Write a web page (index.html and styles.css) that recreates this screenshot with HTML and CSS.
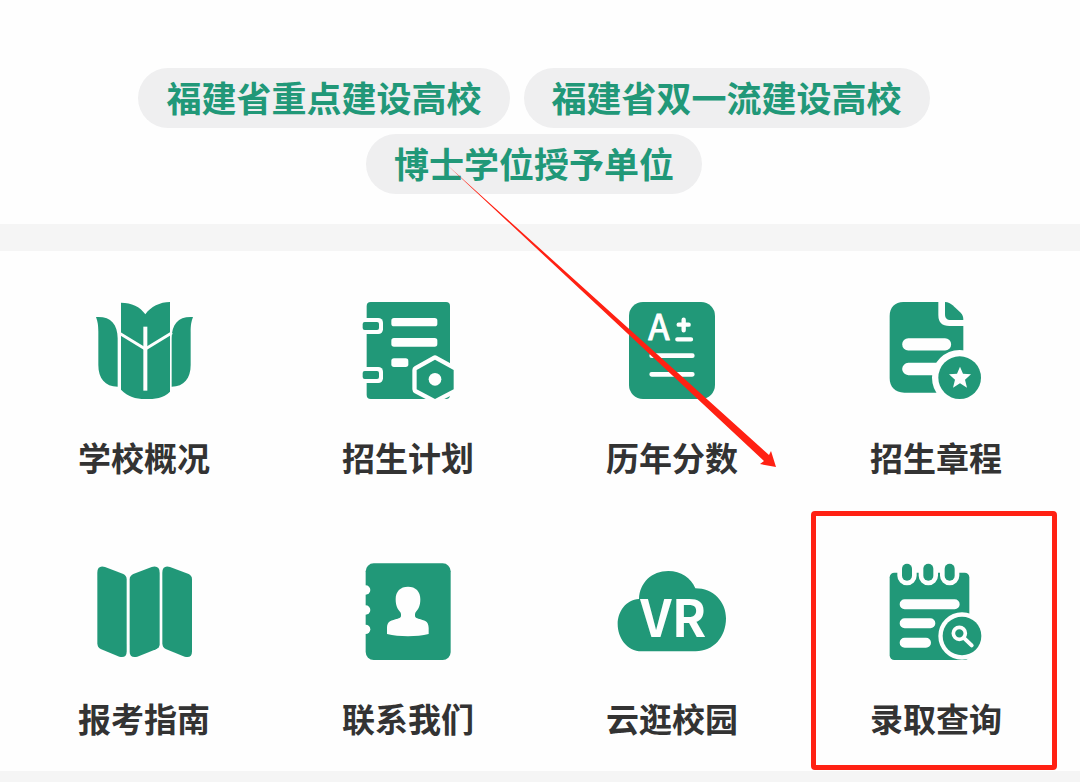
FILE: index.html
```html
<!DOCTYPE html>
<html lang="zh-CN">
<head>
  <meta charset="UTF-8" />
  <meta name="viewport" content="width=device-width, initial-scale=1.0"/>
  <title>招生服务</title>
  <link rel="stylesheet" href="styles.css">
</head>
<body>
  <header class="school">
    <ul class="tags">
      <li class="tag">福建省重点建设高校</li>
      <li class="tag">福建省双一流建设高校</li>
      <li class="tag">博士学位授予单位</li>
    </ul>
  </header>

  <nav class="menu">
    <a class="item" href="#">
      <svg class="icon" viewBox="-3 0 390 360" aria-hidden="true">
        <path d="M48 81C90 78 113 100 113 145V290C75 290 55 265 55 225V125C55 105 53 95 48 81Z"/>
        <path d="M339 81C297 78 275 100 275 145V290C312 290 332 265 332 225V125C332 105 334 95 339 81Z"/>
        <path d="M123 38C155 38 180 50 196 73C212 50 240 36 270 36V305C250 325 225 327 196 327C165 327 145 320 123 299Z"/>
        <path class="line" stroke-width="9" d="M116 128L196 177L276 128"/>
        <path class="line" stroke-width="12" d="M196 110V302"/>
      </svg>
      <span class="label">学校概况</span>
    </a>
    <a class="item" href="#">
      <svg class="icon" viewBox="-6 0 390 360" aria-hidden="true">
        <rect x="65" y="36" width="250" height="291" rx="12"/>
        <rect class="white" x="40" y="84" width="74" height="48" rx="14"/>
        <rect class="white" x="40" y="231" width="74" height="48" rx="14"/>
        <rect x="53" y="96" width="49" height="24" rx="6"/>
        <rect x="53" y="243" width="49" height="24" rx="6"/>
        <rect class="white" x="139" y="84" width="138" height="25" rx="8"/>
        <rect class="white" x="139" y="144" width="138" height="26" rx="8"/>
        <rect class="white" x="139" y="205" width="51" height="26" rx="8"/>
        <path class="ring" stroke-width="26" d="M270 209L326 240V298L270 327L215 298V240Z"/>
        <circle class="white" cx="270" cy="268" r="19"/>
      </svg>
      <span class="label">招生计划</span>
    </a>
    <a class="item" href="#">
      <svg class="icon" viewBox="-9 0 390 360" aria-hidden="true">
        <rect x="57" y="36" width="258" height="291" rx="42"/>
        <text class="grade" x="115" y="151">A</text>
        <path class="line round" stroke-width="13" d="M206 104H236M221 89V121M202 148H243"/>
        <path class="line round" stroke-width="14" d="M125 197H247M125 253H247"/>
      </svg>
      <span class="label">历年分数</span>
    </a>
    <a class="item" href="#">
      <svg class="icon" viewBox="3 0 390 360" aria-hidden="true">
        <path d="M100 36H205V75Q205 108 238 108H280V308H103C75 308 59 290 59 265V78C59 52 75 36 100 36Z"/>
        <path d="M225 36C235 36 241 40 248 46L272 68C278 74 280 80 280 90H243C230 90 225 84 225 72Z"/>
        <path class="line round" stroke-width="37" d="M115 163H225M115 237H225"/>
        <circle class="ring" stroke-width="38" cx="269" cy="263" r="64"/>
        <path class="white" d="M270 230L279 251L303 253L285 269L291 293L270 280L249 293L255 269L237 253L261 251Z"/>
      </svg>
      <span class="label">招生章程</span>
    </a>
    <a class="item" href="#">
      <svg class="icon" viewBox="-3 3 390 360" aria-hidden="true">
        <path d="M52 68Q52 45 75 51L130 72Q140 77 140 88V305Q140 325 118 320L62 297Q52 292 52 280Z"/>
        <path d="M149 88Q149 77 160 72L215 51Q239 45 239 68V283Q239 293 228 298L172 320Q149 325 149 305Z"/>
        <path d="M247 68Q247 45 270 51L326 72Q336 77 336 88V305Q336 325 314 320L257 297Q247 292 247 280Z"/>
      </svg>
      <span class="label">报考指南</span>
    </a>
    <a class="item" href="#">
      <svg class="icon" viewBox="-6 3 390 360" aria-hidden="true">
        <rect x="62" y="40" width="255" height="290" rx="24"/>
        <circle class="white" cx="62" cy="120" r="14"/>
        <circle class="white" cx="62" cy="180" r="14"/>
        <circle class="white" cx="62" cy="238" r="14"/>
        <path class="white" d="M189 110C212 110 226 124 226 148C226 168 220 178 211 188C208 200 211 203 220 206C238 211 251 212 251 234V252C215 261 163 261 126 252V234C126 212 140 211 158 206C167 203 170 200 167 188C158 178 152 168 152 148C152 124 166 110 189 110Z"/>
      </svg>
      <span class="label">联系我们</span>
    </a>
    <a class="item" href="#">
      <svg class="icon" viewBox="6 3 390 360" aria-hidden="true">
        <path d="M110 304C65 304 38 262 38 222C38 185 62 150 102 147C104 98 140 63 190 63C228 63 258 84 271 115C325 115 363 155 363 205C363 262 325 304 272 304Z"/>
        <text class="vr" x="106" y="261">VR</text>
      </svg>
      <span class="label">云逛校园</span>
    </a>
    <a class="item marked" href="#">
      <svg class="icon" viewBox="3 3 390 360" aria-hidden="true">
        <rect x="59" y="68" width="239" height="262" rx="14"/>
        <rect class="ring" stroke-width="28" x="96" y="41" width="30" height="51" rx="15"/>
        <rect class="ring" stroke-width="28" x="160" y="41" width="30" height="51" rx="15"/>
        <rect class="ring" stroke-width="28" x="224" y="41" width="30" height="51" rx="15"/>
        <path class="line round" stroke-width="30" d="M104 163H254M104 220H181M104 278H168"/>
        <circle class="ring" stroke-width="26" cx="276" cy="258" r="58"/>
        <circle class="line" stroke-width="11" cx="268" cy="250" r="18"/>
        <path class="line round" stroke-width="12" d="M283 265L305 286"/>
      </svg>
      <span class="label">录取查询</span>
    </a>
  </nav>

  <!-- arrow pointing to the query entry -->
  <svg class="arrow" viewBox="440 160 340 310" aria-hidden="true">
    <path d="M445 163L769 455L771 451L776 467L760 464L764 461Z"/>
  </svg>
</body>
</html>
```
FILE: styles.css
```css
* {
  box-sizing: border-box;
}

body {
  margin: 0;
  position: relative;
  min-height: 100vh;
  font-family: "Noto Sans CJK SC", sans-serif;
  font-weight: 700;
  background-color: #f5f5f5;
}

.school {
  padding: 68px 12px 30px 0;
  margin-bottom: 27px;
  background-color: #fefefe;
}

.tags {
  display: flex;
  flex-wrap: wrap;
  justify-content: center;
  gap: 6px 14px;
  max-width: 860px;
  margin: 0 auto;
  padding: 0;
  list-style: none;
}

.tag {
  padding: 0 28px 2px;
  border-radius: 30px;
  background-color: #efeff0;
  color: #219878;
  font-size: 35px;
  line-height: 58px;
}

.menu {
  display: grid;
  grid-template-columns: repeat(4, 1fr);
  row-gap: 76px;
  padding: 39px 12px 35px;
  background-color: #fefefe;
}

.item {
  position: relative;
  display: flex;
  flex-direction: column;
  align-items: center;
  gap: 29px;
  color: #333;
  text-decoration: none;
}

.label {
  font-size: 33px;
  line-height: 36px;
}

.icon {
  width: 130px;
  height: 120px;
  fill: #219878;
}

.icon .white {
  fill: #fefefe;
}

.icon .line {
  fill: none;
  stroke: #fefefe;
}

.icon .round {
  stroke-linecap: round;
}

/* green shape with a white gap around it */
.icon .ring {
  stroke: #fefefe;
  stroke-linejoin: round;
  paint-order: stroke;
}

.icon .grade {
  fill: #fefefe;
  stroke: #fefefe;
  stroke-width: 3px;
  stroke-linejoin: round;
  font-size: 105px;
  font-weight: 400;
}

.icon .vr {
  fill: #fefefe;
  font-size: 152px;
}

.marked::after {
  content: "";
  position: absolute;
  inset: -40px 11px -34px 7px;
  border: 5px solid #ff2113;
  border-radius: 4px;
}

.arrow {
  position: absolute;
  top: 160px;
  left: 440px;
  width: 340px;
  height: 310px;
  fill: #ff2113;
  pointer-events: none;
}
```
